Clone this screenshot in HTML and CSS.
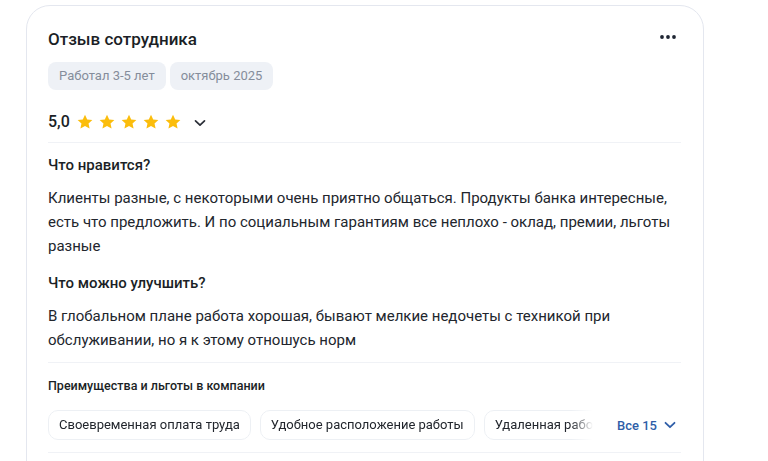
FILE: index.html
```html
<!DOCTYPE html>
<html lang="ru">
<head>
<meta charset="utf-8">
<link rel="stylesheet" href="styles.css">
</head>
<body>
<div class="card">
  <div class="header">
    <h2 class="title">Отзыв сотрудника</h2>
    <button class="more" aria-label="Ещё">
      <svg width="18" height="6" viewBox="0 0 18 6"><circle cx="3" cy="3" r="1.9" fill="#1f2633"/><circle cx="9" cy="3" r="1.9" fill="#1f2633"/><circle cx="15" cy="3" r="1.9" fill="#1f2633"/></svg>
    </button>
  </div>
  <div class="tags">
    <span class="tag">Работал 3-5 лет</span>
    <span class="tag">октябрь 2025</span>
  </div>
  <div class="rating">
    <span class="score">5,0</span>
    <span class="stars">
      <svg class="star" viewBox="0 0 24 24"><path d="M12 2.2l2.95 6.3 6.85.75-5.1 4.65 1.4 6.8L12 17.3l-6.1 3.4 1.4-6.8-5.1-4.65 6.85-.75z"/></svg>
      <svg class="star" viewBox="0 0 24 24"><path d="M12 2.2l2.95 6.3 6.85.75-5.1 4.65 1.4 6.8L12 17.3l-6.1 3.4 1.4-6.8-5.1-4.65 6.85-.75z"/></svg>
      <svg class="star" viewBox="0 0 24 24"><path d="M12 2.2l2.95 6.3 6.85.75-5.1 4.65 1.4 6.8L12 17.3l-6.1 3.4 1.4-6.8-5.1-4.65 6.85-.75z"/></svg>
      <svg class="star" viewBox="0 0 24 24"><path d="M12 2.2l2.95 6.3 6.85.75-5.1 4.65 1.4 6.8L12 17.3l-6.1 3.4 1.4-6.8-5.1-4.65 6.85-.75z"/></svg>
      <svg class="star" viewBox="0 0 24 24"><path d="M12 2.2l2.95 6.3 6.85.75-5.1 4.65 1.4 6.8L12 17.3l-6.1 3.4 1.4-6.8-5.1-4.65 6.85-.75z"/></svg>
    </span>
    <svg class="chev" width="12" height="8" viewBox="0 0 12 8"><path d="M1.5 1.8L6 6.2l4.5-4.4" fill="none" stroke="#2b2f38" stroke-width="1.7" stroke-linecap="round" stroke-linejoin="round"/></svg>
  </div>
  <div class="divider"></div>
  <div class="section first">
    <h3 class="sec-title">Что нравится?</h3>
    <p class="sec-text">Клиенты разные, с некоторыми очень приятно общаться. Продукты банка интересные, есть что предложить. И по социальным гарантиям все неплохо - оклад, премии, льготы разные</p>
  </div>
  <div class="section">
    <h3 class="sec-title">Что можно улучшить?</h3>
    <p class="sec-text">В глобальном плане работа хорошая, бывают мелкие недочеты с техникой при обслуживании, но я к этому отношусь норм</p>
  </div>
  <div class="divider d2"></div>
  <h4 class="perks-title">Преимущества и льготы в компании</h4>
  <div class="perks">
    <div class="perk-list">
      <span class="perk">Своевременная оплата труда</span>
      <span class="perk">Удобное расположение работы</span>
      <span class="perk">Удаленная работа</span>
      <span class="perk">ДМС</span>
    </div>
    <button class="all">Все 15
      <svg width="12" height="8" viewBox="0 0 12 8"><path d="M1.5 1.8L6 6.2l4.5-4.4" fill="none" stroke="#2f5ea8" stroke-width="1.8" stroke-linecap="round" stroke-linejoin="round"/></svg>
    </button>
  </div>
  <div class="divider d3"></div>
</div>
</body>
</html>
```

FILE: styles.css
```css
* { box-sizing: border-box; }
html, body { margin: 0; padding: 0; background: #fff; }
body {
  font-family: Roboto, "Liberation Sans", Arial, sans-serif;
  color: #1f2329;
  overflow: hidden;
}
.card {
  margin: 5px 0 0 26px;
  width: 678px;
  border: 1px solid #e4e7ef;
  border-radius: 24px;
  padding: 21px 22px 40px 21px;
}
.header {
  display: flex;
  align-items: center;
  justify-content: space-between;
  height: 24px;
}
.title {
  margin: 0;
  font-size: 17px;
  font-weight: 500;
  line-height: 24px;
  color: #1b1f26;
}
.more {
  border: 0;
  background: none;
  padding: 0;
  margin-right: 4px;
  width: 18px;
  height: 24px;
  display: flex;
  align-items: center;
  margin-top: -5px;
}
.tags {
  display: flex;
  gap: 4px;
  margin-top: 11px;
}
.tag {
  height: 28px;
  line-height: 28px;
  padding: 0 11px;
  border-radius: 8px;
  background: #eef1f6;
  color: #858d9b;
  font-size: 13px;
}
.rating {
  display: flex;
  align-items: center;
  height: 24px;
  margin-top: 20px;
}
.score {
  font-size: 16px;
  font-weight: 500;
  color: #1b1f26;
  line-height: 24px;
}
.stars {
  display: flex;
  gap: 4px;
  margin-left: 6px;
}
.star {
  width: 18px;
  height: 18px;
  fill: #fbbd0c;
}
.chev { margin-left: 12px; margin-top: 1px; }
.divider {
  height: 1px;
  background: #f0f2f6;
  margin-top: 8px;
}
.section { margin-top: 15px; }
.section.first { margin-top: 12px; }
.sec-title {
  margin: 0;
  font-size: 15px;
  font-weight: 500;
  line-height: 20px;
  color: #1b1f26;
}
.sec-text {
  margin: 11px 0 0;
  font-size: 15px;
  line-height: 24px;
  color: #22262d;
}
.d2 { margin-top: 10px; }
.perks-title {
  margin: 14px 0 0;
  font-size: 12.5px;
  font-weight: 500;
  line-height: 18px;
  color: #1b1f26;
}
.perks {
  display: flex;
  align-items: center;
  margin-top: 15px;
}
.perk-list {
  flex: 1;
  min-width: 0;
  display: flex;
  gap: 9px;
  overflow: hidden;
  -webkit-mask-image: linear-gradient(to right, #000 calc(100% - 30px), transparent calc(100% - 8px));
  mask-image: linear-gradient(to right, #000 calc(100% - 30px), transparent calc(100% - 8px));
}
.perk {
  flex: none;
  height: 30px;
  line-height: 28px;
  padding: 0 10px;
  border: 1px solid #edf0f4;
  border-radius: 10px;
  font-size: 13px;
  color: #22262d;
  white-space: nowrap;
}
.all {
  flex: none;
  border: 0;
  background: none;
  font-family: inherit;
  font-size: 13px;
  font-weight: 500;
  color: #2f5ea8;
  display: flex;
  align-items: center;
  gap: 7px;
  padding: 0 5px 0 16px;
}
.d3 { margin-top: 12px; }
```
